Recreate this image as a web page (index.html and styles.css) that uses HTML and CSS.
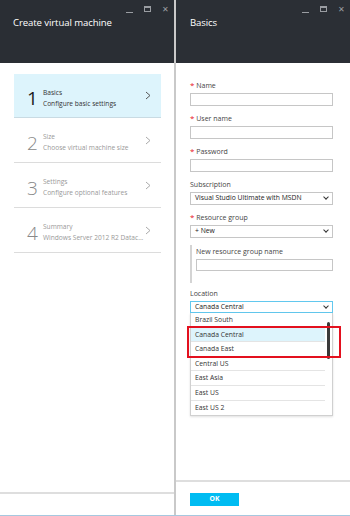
FILE: index.html
```html
<!DOCTYPE html>
<html lang="en">
<head>
    <meta charset="UTF-8">
    <title>Create virtual machine</title>
    <link rel="stylesheet" href="styles.css">
</head>
<body>
    <div class="portal">
        <div class="blade blade-steps">
            <div class="blade-header">
                <div class="window-controls">
                    <span class="ctl ctl-min"></span>
                    <span class="ctl ctl-max"></span>
                    <span class="ctl ctl-close">&#x2715;</span>
                </div>
                <h1>Create virtual machine</h1>
            </div>
            <div class="blade-body">
                <ul class="steps">
                    <li class="step active">
                        <span class="step-num">1</span>
                        <div class="step-text">
                            <div class="step-title">Basics</div>
                            <div class="step-sub">Configure basic settings</div>
                        </div>
                        <svg class="chevron" width="6" height="9" viewBox="0 0 6 9"><polyline points="1,1 5,4.5 1,8" fill="none" stroke="#555" stroke-width="1"/></svg>
                    </li>
                    <li class="step">
                        <span class="step-num">2</span>
                        <div class="step-text">
                            <div class="step-title">Size</div>
                            <div class="step-sub">Choose virtual machine size</div>
                        </div>
                        <svg class="chevron" width="6" height="9" viewBox="0 0 6 9"><polyline points="1,1 5,4.5 1,8" fill="none" stroke="#aaa" stroke-width="1"/></svg>
                    </li>
                    <li class="step">
                        <span class="step-num">3</span>
                        <div class="step-text">
                            <div class="step-title">Settings</div>
                            <div class="step-sub">Configure optional features</div>
                        </div>
                        <svg class="chevron" width="6" height="9" viewBox="0 0 6 9"><polyline points="1,1 5,4.5 1,8" fill="none" stroke="#aaa" stroke-width="1"/></svg>
                    </li>
                    <li class="step">
                        <span class="step-num">4</span>
                        <div class="step-text">
                            <div class="step-title">Summary</div>
                            <div class="step-sub">Windows Server 2012 R2 Datac...</div>
                        </div>
                        <svg class="chevron" width="6" height="9" viewBox="0 0 6 9"><polyline points="1,1 5,4.5 1,8" fill="none" stroke="#aaa" stroke-width="1"/></svg>
                    </li>
                </ul>
            </div>
            <div class="blade-footer left-footer"></div>
        </div>

        <div class="blade blade-form">
            <div class="blade-header">
                <div class="window-controls">
                    <span class="ctl ctl-min"></span>
                    <span class="ctl ctl-max"></span>
                    <span class="ctl ctl-close">&#x2715;</span>
                </div>
                <h1>Basics</h1>
            </div>
            <div class="blade-body form">
                <div class="field">
                    <label><span class="req">*</span> Name</label>
                    <div class="input"></div>
                </div>
                <div class="field">
                    <label><span class="req">*</span> User name</label>
                    <div class="input"></div>
                </div>
                <div class="field">
                    <label><span class="req">*</span> Password</label>
                    <div class="input"></div>
                </div>
                <div class="field">
                    <label>Subscription</label>
                    <div class="input select">Visual Studio Ultimate with MSDN<span class="caret"></span></div>
                </div>
                <div class="field">
                    <label><span class="req">*</span> Resource group</label>
                    <div class="input select">+ New<span class="caret"></span></div>
                    <div class="sub-group">
                        <label>New resource group name</label>
                        <div class="input"></div>
                    </div>
                </div>
                <div class="field">
                    <label>Location</label>
                    <div class="input select focused">Canada Central<span class="caret"></span></div>
                    <div class="dropdown">
                        <ul class="options">
                            <li>Brazil South</li>
                            <li class="selected">Canada Central</li>
                            <li>Canada East</li>
                            <li>Central US</li>
                            <li>East Asia</li>
                            <li>East US</li>
                            <li>East US 2</li>
                        </ul>
                        <div class="scrollbar"><span class="thumb"></span></div>
                        <div class="highlight-box"></div>
                    </div>
                </div>
            </div>
            <div class="blade-footer">
                <button class="ok-button">OK</button>
            </div>
        </div>
    </div>
</body>
</html>
```

FILE: styles.css
```css
body {
    margin: 0;
    font-family: "Open Sans", "Noto Sans", Arial, sans-serif;
    background-color: #fff;
}

.portal {
    display: flex;
    width: 350px;
    height: 515px;
    border-bottom: 1px solid #a6c8df;
}

.blade {
    display: flex;
    flex-direction: column;
    background-color: #fff;
}

.blade-steps {
    width: 174px;
}

.blade-form {
    flex: 1;
    border-left: 2px solid #c9c9c9;
}

.blade-header {
    flex: none;
    height: 63px;
    background-color: #2a2e34;
    color: #fff;
    position: relative;
    box-sizing: border-box;
    padding: 17px 0 0 13px;
}

.blade-form .blade-header {
    padding-left: 14px;
    background-color: #2b2f35;
}

.blade-header h1 {
    margin: 0;
    font-size: 9.6px;
    line-height: 12px;
    font-weight: normal;
    letter-spacing: -0.1px;
}

.window-controls {
    position: absolute;
    top: 4px;
    right: 5px;
    display: flex;
    gap: 11px;
    align-items: center;
    height: 10px;
}

.ctl {
    display: block;
    color: #9a9da2;
}

.ctl-min {
    width: 7px;
    height: 1px;
    margin-top: 7px;
    background-color: #9a9da2;
}

.ctl-max {
    width: 5px;
    height: 3px;
    border: 1.5px solid #9a9da2;
    border-top-width: 2.5px;
}

.ctl-close {
    font-size: 8px;
    line-height: 10px;
}

.blade-body {
    flex: 1;
    min-height: 0;
}

/* steps */

.steps {
    list-style: none;
    margin: 0;
    padding: 11px 13px 0 14px;
}

.step {
    display: flex;
    align-items: center;
    height: 44px;
    padding-top: 5px;
    box-sizing: border-box;
    border-bottom: 1px solid #dcdcdc;
    color: #999;
}

.step + .step {
    height: 45px;
}

.step.active {
    background-color: #ddf4fc;
    border-bottom-color: #c9dbe3;
    color: #333;
}

.step-num {
    width: 16px;
    padding-left: 13px;
    font-size: 19px;
    font-weight: 300;
    line-height: 20px;
    color: #888;
}

.step.active .step-num {
    color: #1a1a1a;
    font-weight: normal;
}

.step-text {
    flex: 1;
    font-size: 6.6px;
    line-height: 10px;
    white-space: nowrap;
}

.step-title {
    margin-bottom: 1px;
}

.chevron {
    margin-right: 10px;
    margin-top: -5px;
}

.left-footer {
    flex: none;
    height: 21px;
    border-top: 2px solid #dedede;
}

/* form */

.form {
    padding: 17px 17px 0 14px;
}

.field {
    margin-bottom: 7.5px;
}

.field label {
    display: block;
    height: 12px;
    font-size: 7px;
    line-height: 12px;
    margin-bottom: 1px;
    color: #444;
}

.req {
    color: #e81123;
    font-size: 8px;
    line-height: 0;
}

.input {
    height: 12.5px;
    box-sizing: border-box;
    border: 1px solid #c6c6c6;
    background-color: #fff;
}

.select {
    position: relative;
    font-size: 6.8px;
    line-height: 10.5px;
    padding-left: 4px;
    color: #222;
}

.select.focused {
    border-color: #62c8ee;
}

.caret {
    position: absolute;
    right: 4px;
    top: 2px;
    width: 3px;
    height: 3px;
    border-right: 1.3px solid #333;
    border-bottom: 1.3px solid #333;
    transform: rotate(45deg);
}

.sub-group {
    margin-top: 7px;
    margin-bottom: -3px;
    border-left: 2px solid #d4d4d4;
    padding: 1px 0 12px 4px;
}

.dropdown {
    position: relative;
    display: flex;
    border: 1px solid #d0d0d0;
    border-top: none;
    box-shadow: 0 1px 2px rgba(0, 0, 0, 0.12);
}

.options {
    flex: 1;
    list-style: none;
    margin: 0;
    padding: 0;
}

.options li {
    height: 14.6px;
    box-sizing: border-box;
    border-bottom: 1px solid #e4e4e4;
    padding-left: 4px;
    font-size: 6.8px;
    line-height: 14px;
    color: #333;
}

.options li:last-child {
    border-bottom: none;
}

.options li.selected {
    background-color: #ddf4fc;
}

.scrollbar {
    width: 7px;
    position: relative;
}

.thumb {
    position: absolute;
    left: 2px;
    top: 9px;
    width: 3px;
    height: 37px;
    border-radius: 2px;
    background-color: #3a3a3a;
}

.highlight-box {
    position: absolute;
    left: -4px;
    top: 13px;
    width: 150px;
    height: 28px;
    border: 2px solid #e3101e;
}

.blade-form .blade-footer {
    flex: none;
    height: 35px;
    border-top: 2px solid #dedede;
    padding: 11px 0 0 14px;
    box-sizing: border-box;
}

.ok-button {
    display: block;
    width: 49px;
    height: 12.5px;
    padding: 0;
    border: none;
    background-color: #00bcf2;
    color: #fff;
    font-family: inherit;
    font-size: 6.8px;
    font-weight: bold;
    line-height: 12px;
}
```
